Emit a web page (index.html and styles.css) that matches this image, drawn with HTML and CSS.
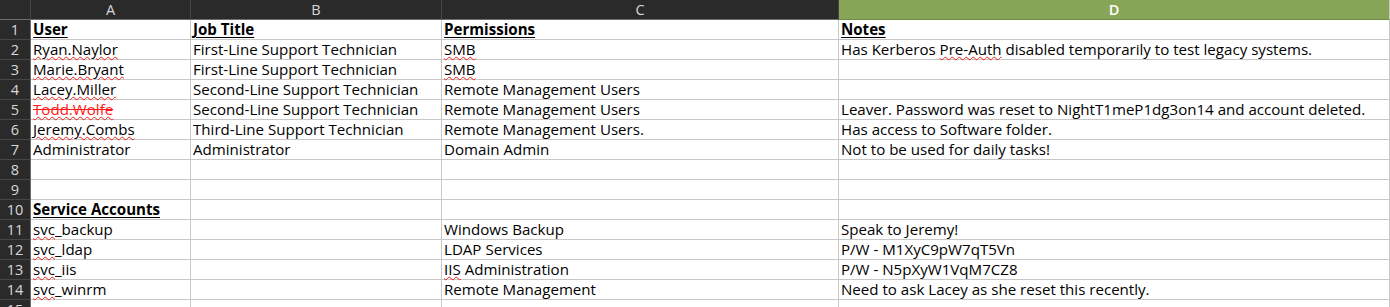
FILE: index.html
```html
<!DOCTYPE html>
<html>
<head>
<meta charset="utf-8">
<link rel="stylesheet" href="styles.css">
</head>
<body>
<div class="sheet">
  <div class="corner"></div>
  <div class="colhead">A</div>
  <div class="colhead">B</div>
  <div class="colhead">C</div>
  <div class="colhead sel">D</div>

  <div class="rowhead">1</div>
  <div class="cell"><span class="hdr">User</span></div>
  <div class="cell"><span class="hdr">Job Title</span></div>
  <div class="cell"><span class="hdr">Permissions</span></div>
  <div class="cell"><span class="hdr">Notes</span></div>

  <div class="rowhead">2</div>
  <div class="cell"><span class="sp">Ryan.Naylor</span></div>
  <div class="cell">First-Line Support Technician</div>
  <div class="cell"><span class="sp">SMB</span></div>
  <div class="cell">Has Kerberos <span class="sp">Pre-Auth</span> disabled temporarily to test legacy systems.</div>

  <div class="rowhead">3</div>
  <div class="cell"><span class="sp">Marie.Bryant</span></div>
  <div class="cell">First-Line Support Technician</div>
  <div class="cell"><span class="sp">SMB</span></div>
  <div class="cell"></div>

  <div class="rowhead">4</div>
  <div class="cell"><span class="sp">Lacey.Miller</span></div>
  <div class="cell">Second-Line Support Technician</div>
  <div class="cell">Remote Management Users</div>
  <div class="cell"></div>

  <div class="rowhead">5</div>
  <div class="cell"><span class="leaver"><span class="sp">Todd.Wolfe</span></span></div>
  <div class="cell">Second-Line Support Technician</div>
  <div class="cell">Remote Management Users</div>
  <div class="cell">Leaver. Password was reset to NightT1meP1dg3on14 and account deleted.</div>

  <div class="rowhead">6</div>
  <div class="cell"><span class="sp">Jeremy.Combs</span></div>
  <div class="cell">Third-Line Support Technician</div>
  <div class="cell">Remote Management Users.</div>
  <div class="cell">Has access to Software folder.</div>

  <div class="rowhead">7</div>
  <div class="cell">Administrator</div>
  <div class="cell">Administrator</div>
  <div class="cell">Domain Admin</div>
  <div class="cell">Not to be used for daily tasks!</div>

  <div class="rowhead">8</div>
  <div class="cell"></div><div class="cell"></div><div class="cell"></div><div class="cell"></div>

  <div class="rowhead">9</div>
  <div class="cell"></div><div class="cell"></div><div class="cell"></div><div class="cell"></div>

  <div class="rowhead">10</div>
  <div class="cell"><span class="hdr">Service Accounts</span></div>
  <div class="cell"></div><div class="cell"></div><div class="cell"></div>

  <div class="rowhead">11</div>
  <div class="cell"><span class="sp">svc</span>_backup</div>
  <div class="cell"></div>
  <div class="cell">Windows Backup</div>
  <div class="cell">Speak to Jeremy!</div>

  <div class="rowhead">12</div>
  <div class="cell"><span class="sp">svc</span>_ldap</div>
  <div class="cell"></div>
  <div class="cell">LDAP Services</div>
  <div class="cell">P/W - M1XyC9pW7qT5Vn</div>

  <div class="rowhead">13</div>
  <div class="cell"><span class="sp">svc</span>_iis</div>
  <div class="cell"></div>
  <div class="cell"><span class="sp">IIS</span> Administration</div>
  <div class="cell">P/W - N5pXyW1VqM7CZ8</div>

  <div class="rowhead">14</div>
  <div class="cell"><span class="sp">svc</span>_winrm</div>
  <div class="cell"></div>
  <div class="cell">Remote Management</div>
  <div class="cell">Need to ask Lacey as she reset this recently.</div>

  <div class="rowhead">15</div>
  <div class="cell"></div><div class="cell"></div><div class="cell"></div><div class="cell"></div>
</div>
</body>
</html>
```

FILE: styles.css
```css
html, body {
  margin: 0;
  padding: 0;
  background: #ffffff;
  overflow: hidden;
}

.sheet {
  display: grid;
  grid-template-columns: 31px 160px 251px 397px 551px;
  grid-auto-rows: 20px;
  font-family: "Open Sans", "Noto Sans", sans-serif;
  font-size: 15.1px;
  color: #000000;
}

.corner,
.colhead {
  background: #2a2a2a;
  border-right: 1px solid #474747;
  border-bottom: 1px solid #6e6e6e;
  box-sizing: border-box;
}

.colhead {
  color: #d8d8d8;
  font-size: 14.5px;
  line-height: 19px;
  text-align: center;
}

.colhead.sel {
  background: #87a557;
  color: #ffffff;
  font-weight: 600;
  border-bottom-color: #6f8d45;
  border-right-color: #c8c8c8;
}

.rowhead {
  background: #2a2a2a;
  color: #d8d8d8;
  font-size: 14.5px;
  line-height: 19px;
  text-align: center;
  border-right: 1px solid #6e6e6e;
  border-bottom: 1px solid #474747;
  box-sizing: border-box;
}

.cell {
  box-sizing: border-box;
  border-right: 1px solid #c8c8c8;
  border-bottom: 1px solid #c8c8c8;
  padding: 0 2px;
  line-height: 19px;
  white-space: nowrap;
  overflow: visible;
}

.hdr {
  font-weight: 700;
  text-decoration: underline;
  text-decoration-thickness: 1px;
  text-underline-offset: 2px;
}

.sp {
  text-decoration: underline wavy #e8201c;
  text-decoration-thickness: 1px;
  text-underline-offset: 1px;
}

.leaver {
  color: #ff1a1a;
  text-decoration: line-through;
  text-decoration-thickness: 1px;
}
```
